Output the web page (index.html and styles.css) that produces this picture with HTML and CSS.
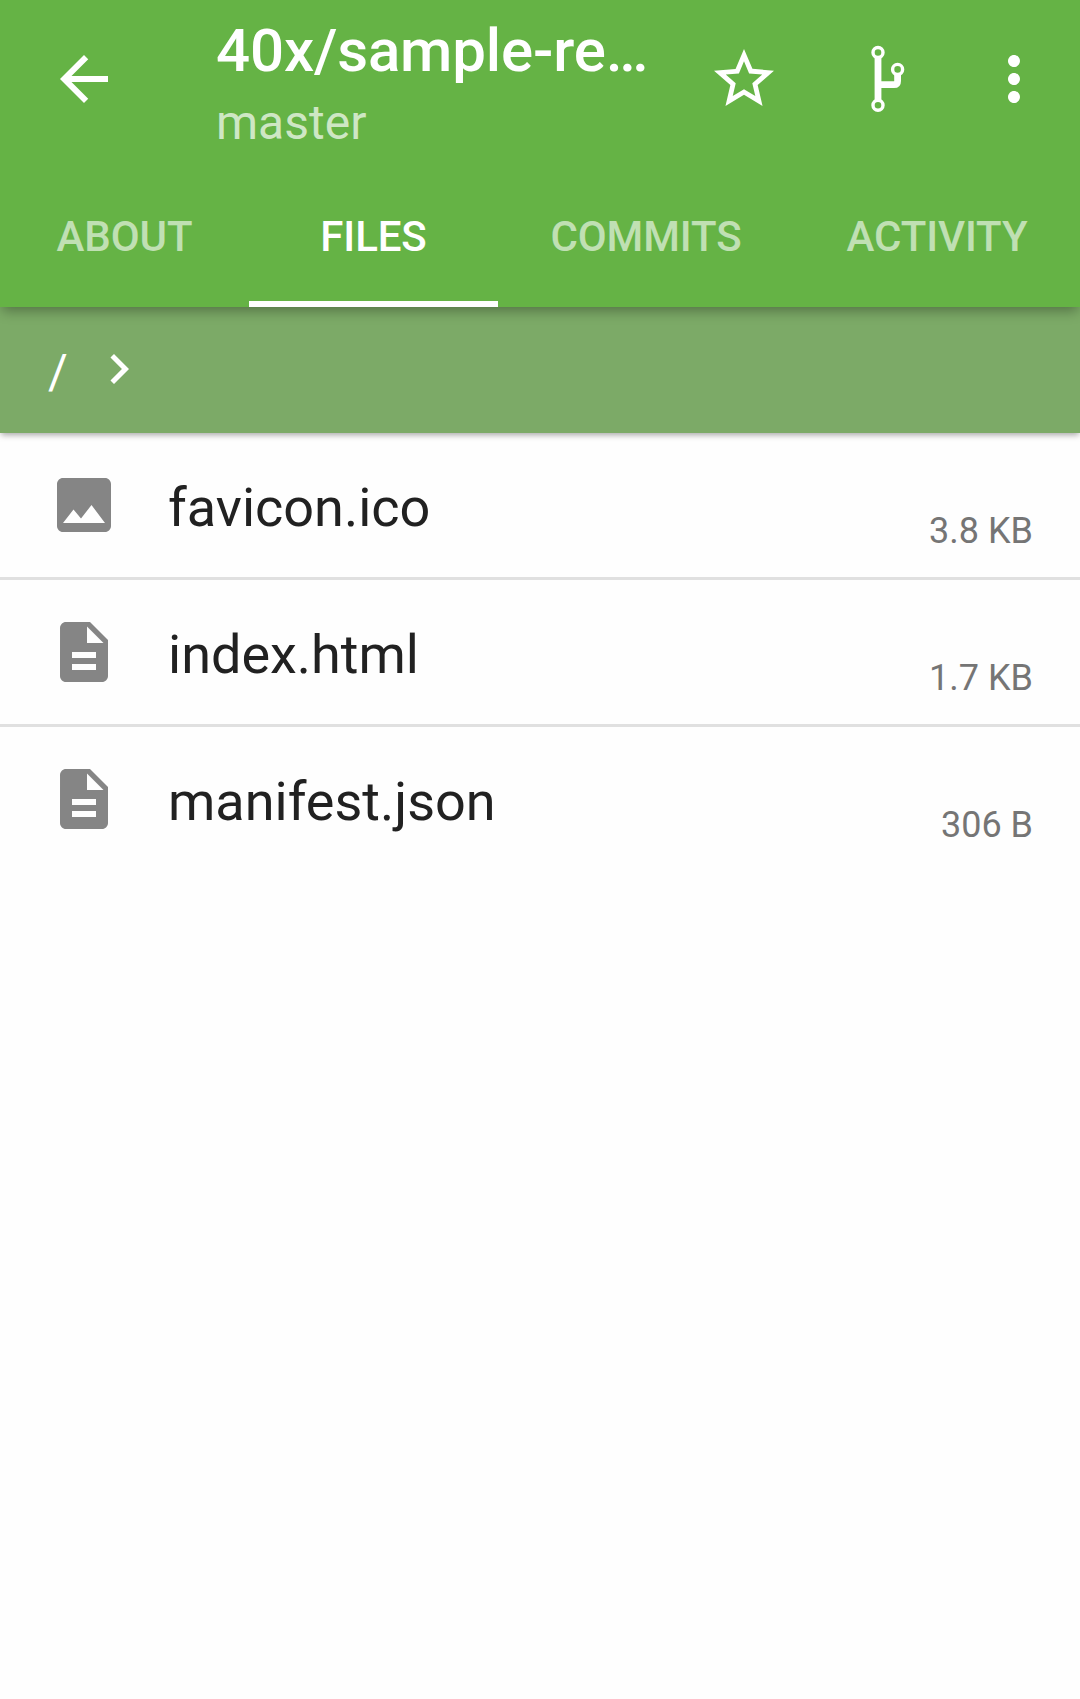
FILE: index.html
```html
<!DOCTYPE html>
<html lang="en">
<head>
<meta charset="utf-8">
<title>40x/sample-re…</title>
<link rel="stylesheet" href="styles.css">
</head>
<body>
<header class="app-bar">
  <div class="toolbar">
    <svg class="icon back" viewBox="0 0 24 24"><path d="M20 11H7.83l5.59-5.59L12 4l-8 8 8 8 1.41-1.41L7.83 13H20v-2z"/></svg>
    <div class="titles">
      <h1 class="title">40x/sample-re…</h1>
      <p class="subtitle">master</p>
    </div>
    <div class="actions">
      <svg class="icon" viewBox="0 0 24 24"><path d="M22 9.24l-7.19-.62L12 2 9.19 8.63 2 9.24l5.46 4.73L5.82 21 12 17.27 18.18 21l-1.63-7.03L22 9.24zM12 15.4l-3.76 2.27 1-4.28-3.32-2.88 4.38-.38L12 6.1l1.71 4.04 4.38.38-3.32 2.88 1 4.28L12 15.4z"/></svg>
      <svg class="icon branch" viewBox="0 0 72 72"><path class="stem" d="M27 14.500V57.500M27 41.700H43Q46.600 41.700 46.600 38V31"/><circle cx="27" cy="9.500" r="5"/><circle cx="27" cy="62.300" r="5"/><circle cx="46.600" cy="26.400" r="5"/></svg>
      <svg class="icon" viewBox="0 0 24 24"><path d="M12 8c1.100 0 2-.9 2-2s-.9-2-2-2-2 .9-2 2 .9 2 2 2zm0 2c-1.100 0-2 .9-2 2s.9 2 2 2 2-.9 2-2-.9-2-2-2zm0 6c-1.100 0-2 .9-2 2s.9 2 2 2 2-.9 2-2-.9-2-2-2z"/></svg>
    </div>
  </div>
  <nav class="tabs">
    <a class="tab">ABOUT</a>
    <a class="tab active">FILES</a>
    <a class="tab">COMMITS</a>
    <a class="tab">ACTIVITY</a>
  </nav>
</header>
<nav class="path-bar">
  <span class="path-root">/</span>
  <svg class="chevron" viewBox="0 0 24 24"><path d="M10 6L8.590 7.410 13.170 12l-4.580 4.590L10 18l6-6z"/></svg>
</nav>
<main class="files">
  <div class="file">
    <svg class="icon" viewBox="0 0 24 24"><path d="M21 19V5c0-1.100-.9-2-2-2H5c-1.100 0-2 .9-2 2v14c0 1.100.9 2 2 2h14c1.100 0 2-.9 2-2zM8.500 13.500l2.500 3.010L14.500 12l4.500 6H5l3.500-4.500z"/></svg>
    <span class="name">favicon.ico</span>
    <span class="size">3.8 KB</span>
  </div>
  <div class="file">
    <svg class="icon" viewBox="0 0 24 24"><path d="M14 2H6c-1.100 0-1.990.9-1.990 2L4 20c0 1.100.89 2 1.990 2H18c1.100 0 2-.9 2-2V8l-6-6zm2 16H8v-2h8v2zm0-4H8v-2h8v2zm-3-5V3.500L18.500 9H13z"/></svg>
    <span class="name">index.html</span>
    <span class="size">1.7 KB</span>
  </div>
  <div class="file">
    <svg class="icon" viewBox="0 0 24 24"><path d="M14 2H6c-1.100 0-1.990.9-1.990 2L4 20c0 1.100.89 2 1.990 2H18c1.100 0 2-.9 2-2V8l-6-6zm2 16H8v-2h8v2zm0-4H8v-2h8v2zm-3-5V3.500L18.500 9H13z"/></svg>
    <span class="name">manifest.json</span>
    <span class="size">306 B</span>
  </div>
</main>
</body>
</html>
```
FILE: styles.css
```css
* {
  box-sizing: border-box;
}

body {
  margin: 0;
  min-height: 1699px;
  background: #fefefe;
  color: #212121;
  font-family: Roboto, sans-serif;
}

.icon {
  display: block;
  flex: none;
  width: 72px;
  height: 72px;
  fill: currentColor;
}

/* App bar */
.app-bar {
  position: relative;
  z-index: 2;
  height: 307px;
  background: #65b345;
  color: #fff;
  box-shadow: 0 6px 12px -2px rgba(0, 0, 0, 0.32);
}

.toolbar {
  display: flex;
  align-items: flex-start;
  height: 163px;
  padding: 0 30px 0 48px;
}

.back {
  margin-top: 43px;
}

.titles {
  flex: 1;
  margin-left: 96px;
  padding-top: 16px;
}

.title {
  margin: 0;
  font-size: 60px;
  font-weight: 500;
  letter-spacing: -0.15px;
  line-height: 70px;
  white-space: nowrap;
}

.subtitle {
  margin: 9px 0 0;
  font-size: 48px;
  line-height: 56px;
  color: rgba(255, 255, 255, 0.7);
}

.actions {
  display: flex;
  gap: 63px;
  padding-top: 43px;
}

.branch {
  margin: 0 -8px 0 8px;
  fill: none;
  stroke: currentColor;
  stroke-width: 3.4;
}

.stem {
  stroke-width: 6.8;
}

.tabs {
  display: grid;
  grid-template-columns: 249px 249px 296px 286px;
  height: 144px;
}

.tab {
  padding-top: 49px;
  border-bottom: 6px solid transparent;
  color: rgba(255, 255, 255, 0.6);
  font-size: 42px;
  font-weight: 500;
  letter-spacing: -0.12px;
  line-height: 50px;
  text-align: center;
}

.tab.active {
  border-bottom-color: #fff;
  color: #fff;
}

/* Path bar */
.path-bar {
  position: relative;
  z-index: 1;
  display: flex;
  align-items: center;
  gap: 21px;
  height: 126px;
  padding: 0 48px 3px;
  background: #7caa67;
  color: #fff;
  box-shadow: 0 3px 6px -1px rgba(0, 0, 0, 0.35);
}

.path-root {
  padding-top: 7px;
  font-size: 48px;
  line-height: 56px;
}

.chevron {
  width: 60px;
  height: 60px;
  fill: currentColor;
}

/* File list */
.file {
  display: flex;
  align-items: flex-start;
  height: 147px;
  padding: 36px 47px 0 48px;
  border-bottom: 3px solid #e0e0e0;
}

.file:last-child {
  border-bottom: 0;
}

.file .icon {
  color: #858585;
}

.name {
  flex: 1;
  margin-left: 48px;
  padding-top: 7px;
  font-size: 54px;
  line-height: 64px;
}

.size {
  padding-top: 41px;
  color: #757575;
  font-size: 36px;
  line-height: 42px;
}
```
